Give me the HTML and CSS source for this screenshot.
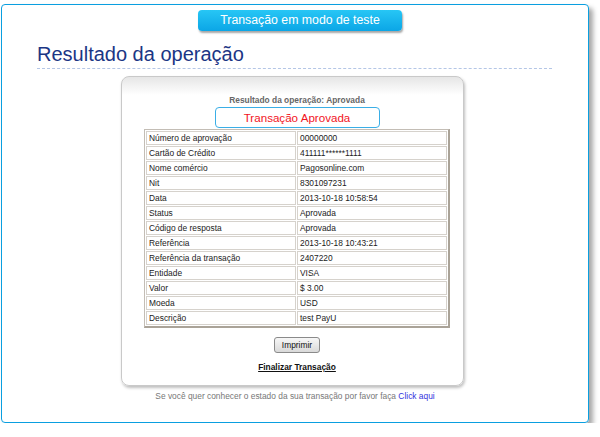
FILE: index.html
```html
<!DOCTYPE html>
<html lang="pt">
<head>
<meta charset="utf-8">
<title>Resultado da operação</title>
<link rel="stylesheet" href="styles.css">
</head>
<body>
<div class="frame">
  <div class="pill">Transação em modo de teste</div>
  <h1 class="title">Resultado da operação</h1>
  <div class="card">
    <div class="status">Resultado da operação: Aprovada</div>
    <div class="approved">Transação Aprovada</div>
    <table class="data">
      <tr><td>Número de aprovação</td><td>00000000</td></tr>
      <tr><td>Cartão de Crédito</td><td>411111******1111</td></tr>
      <tr><td>Nome comércio</td><td>Pagosonline.com</td></tr>
      <tr><td>Nit</td><td>8301097231</td></tr>
      <tr><td>Data</td><td>2013-10-18 10:58:54</td></tr>
      <tr><td>Status</td><td>Aprovada</td></tr>
      <tr><td>Código de resposta</td><td>Aprovada</td></tr>
      <tr><td>Referência</td><td>2013-10-18 10:43:21</td></tr>
      <tr><td>Referência da transação</td><td>2407220</td></tr>
      <tr><td>Entidade</td><td>VISA</td></tr>
      <tr><td>Valor</td><td>$ 3.00</td></tr>
      <tr><td>Moeda</td><td>USD</td></tr>
      <tr><td>Descrição</td><td>test PayU</td></tr>
    </table>
    <div class="actions">
      <button class="print" type="button">Imprimir</button>
      <a class="finish" href="#">Finalizar Transação</a>
    </div>
  </div>
  <p class="footer">Se você quer conhecer o estado da sua transação por favor faça <a href="#" class="click">Click aqui</a></p>
</div>
</body>
</html>
```
FILE: styles.css
```css
* { box-sizing: border-box; }
html, body { margin: 0; padding: 0; background: #fff; }
body { font-family: "Liberation Sans", Arial, sans-serif; }

.frame {
  margin: 4px 0 0 1px;
  width: 588px;
  height: 419px;
  border: 1px solid #0a9fe0;
  border-radius: 4px;
  box-shadow: 4px 4px 5px rgba(0,0,0,0.35);
  overflow: hidden;
}

.pill {
  margin: 5px 0 0 196px;
  width: 204px;
  height: 21px;
  border-radius: 4px;
  background: linear-gradient(#27c6f5, #0ba6e6);
  box-shadow: 1px 2px 2px rgba(0,0,0,0.35);
  color: #fff;
  font-size: 12.3px;
  line-height: 21px;
  text-align: center;
}

.title {
  margin: 11px 0 0 35px;
  width: 515px;
  padding-bottom: 2px;
  font-size: 20px;
  font-weight: normal;
  line-height: 24px;
  color: #1b3685;
  border-bottom: 1px dashed #b4c6e6;
}

.card {
  margin: 7px 0 0 119px;
  width: 343px;
  height: 310px;
  border: 1px solid #c9c9c9;
  border-radius: 8px;
  background: linear-gradient(#e6e6e6, #ffffff 18px);
  box-shadow: 1px 2px 3px rgba(0,0,0,0.25);
  padding: 16px 0 0 9px;
  display: flex;
  flex-direction: column;
  align-items: center;
}

.status {
  font-size: 8.4px;
  font-weight: bold;
  color: #666;
  line-height: 12px;
  margin-top: 1px;
}

.approved {
  margin-top: 1px;
  width: 165px;
  height: 21px;
  border: 1px solid #3aaee6;
  border-radius: 4px;
  color: #f2141e;
  font-size: 11.6px;
  line-height: 19px;
  text-align: center;
}

.data {
  margin-top: 1px;
  width: 306px;
  border-collapse: separate;
  border-spacing: 1px;
  border: 1px solid #c3bdb5;
  border-right-width: 2px;
  border-bottom-width: 2px;
  border-right-color: #aaa398;
  border-bottom-color: #aaa398;
  background: #fff;
  font-size: 8.4px;
  color: #222;
}
.data td {
  width: 50%;
  height: 14px;
  padding: 0 0 0 2px;
  border: 1px solid #d6d2cc;
  line-height: 11px;
}

.actions {
  margin-top: 9px;
  display: flex;
  flex-direction: column;
  align-items: center;
}
.print {
  width: 46px;
  height: 16px;
  padding: 0;
  border: 1px solid #8a8a8a;
  border-radius: 3px;
  background: linear-gradient(#f7f7f7, #d9d9d9);
  font-family: "Liberation Sans", Arial, sans-serif;
  font-size: 8.4px;
  color: #111;
}
.finish {
  margin-top: 8px;
  font-size: 8.4px;
  font-weight: bold;
  color: #111;
  text-decoration: underline;
  line-height: 12px;
}

.footer {
  margin: 4px 0 0 0;
  text-align: center;
  font-size: 8.4px;
  color: #777;
  line-height: 12px;
}
.click {
  color: #3333dd;
  text-decoration: none;
}
```
